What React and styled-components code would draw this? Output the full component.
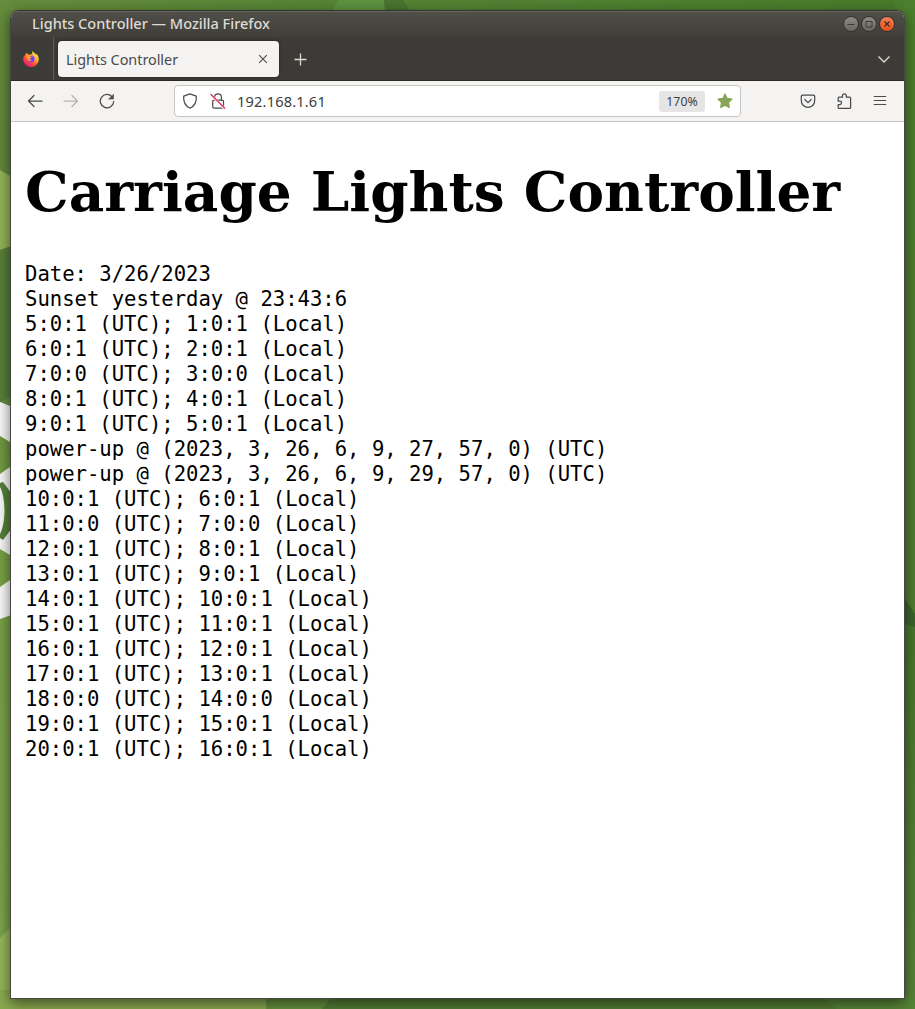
import React from "react";
import styled, { createGlobalStyle } from "styled-components";

const Global = createGlobalStyle`
  * { box-sizing: border-box; }
  html, body { margin: 0; padding: 0; height: 1009px; overflow: hidden; }
`;

const Desktop = styled.main`
  position: relative;
  width: 915px;
  height: 1009px;
  padding: 10px 10px 10px 10px;
  overflow: hidden;
  background: #4f7f2f;
`;

const Wallpaper = styled.svg`
  position: absolute;
  inset: 0;
`;

const Window = styled.section`
  position: relative;
  display: flex;
  flex-direction: column;
  width: 895px;
  height: 989px;
  border: 1px solid #474642;
  border-top-color: #34332f;
  border-radius: 8px 8px 0 0;
  overflow: hidden;
  background: #fff;
`;

const Shadow = styled.div`
  position: relative;
  width: 895px;
  height: 989px;
  border-radius: 8px 8px 0 0;
  box-shadow: 0 4px 14px rgba(0, 0, 0, 0.55);
`;

const TitleBar = styled.header`
  display: flex;
  align-items: center;
  justify-content: space-between;
  height: 26px;
  flex: none;
  padding: 0 9.5px 0 21px;
  background: linear-gradient(#504f4a, #3f3e39);
  box-shadow: inset 0 1px #66655f;
`;

const Title = styled.span`
  padding-bottom: 2px;
  font: 500 14.5px/22px "Noto Sans", "Open Sans", sans-serif;
  color: #dfdbd2;
  white-space: nowrap;
`;

const WindowButtons = styled.div`
  display: flex;
  gap: 2px;
`;

const WindowButton = styled.button`
  width: 16px;
  height: 16px;
  padding: 0;
  border: 1px solid #33322e;
  border-radius: 50%;
  background: ${(p) => (p.$close ? "linear-gradient(#f58059, #e4501c)" : "linear-gradient(#8b8a82, #67665f)")};
  svg { display: block; }
`;

const TabStrip = styled.nav`
  display: flex;
  height: 44px;
  flex: none;
  background: #3c3b37;
  border-bottom: 1px solid #2b2926;
`;

const PinnedTab = styled.div`
  display: flex;
  align-items: center;
  width: 43px;
  padding-left: 12px;
  border-right: 1px solid #5c5b57;
`;

const Tab = styled.div`
  display: flex;
  align-items: center;
  justify-content: space-between;
  width: 221px;
  height: 36px;
  margin: 4px 0 0 4px;
  padding: 0 11px 0 8px;
  border-radius: 4px;
  background: #f4f3f2;
  box-shadow: 0 0 3px rgba(0, 0, 0, 0.5);
`;

const TabLabel = styled.span`
  padding-top: 1px;
  font: 14.4px/20px "Noto Sans", "Open Sans", sans-serif;
  letter-spacing: -0.03px;
  color: #4a4a4a;
  white-space: nowrap;
`;

const NewTab = styled.div`
  display: flex;
  align-items: center;
  margin-left: 14px;
`;

const TabList = styled(NewTab)`
  margin: 0 13px 0 auto;
`;

const ToolBar = styled.div`
  display: flex;
  align-items: center;
  justify-content: space-between;
  height: 41px;
  flex: none;
  padding: 0 16px;
  background: #f4f3f2;
  border-bottom: 1px solid #c6c4c2;
  svg { display: block; }
`;

const NavGroup = styled.div`
  display: flex;
  gap: 20px;
`;

const UrlBar = styled.div`
  display: flex;
  align-items: center;
  width: 567px;
  height: 32px;
  padding: 0 7px;
  border: 1px solid #c6c4c2;
  border-radius: 4px;
  background: #fff;
`;

const Address = styled.span`
  margin: 0 auto 0 11px;
  padding-bottom: 1px;
  font: 14.6px/20px "Noto Sans", "Open Sans", sans-serif;
  letter-spacing: 0.17px;
  color: #3d3d3d;
`;

const LockSlot = styled.span`
  margin-left: 12px;
`;

const ZoomBadge = styled.span`
  width: 46px;
  height: 21px;
  margin-right: 12px;
  border-radius: 3px;
  background: #e5e5e6;
  font: 12.3px/21px "Noto Sans", "Open Sans", sans-serif;
  text-align: center;
  color: #3d3d3d;
`;

const Page = styled.article`
  flex: 1;
  padding: 37px 14px 0;
  color: #000;
`;

const Heading = styled.h1`
  margin: 0;
  font: bold 54.86px/66px "DejaVu Serif", serif;
  white-space: nowrap;
`;

const Log = styled.pre`
  margin: 37px 0 0;
  font: 20.59px/25px "DejaVu Sans Mono", monospace;
`;

const Icon = ({ size = 16, color = "#4b4b4b", width = 1.25, children }) => (
  <svg width={size} height={size} viewBox="0 0 16 16" fill="none" stroke={color} strokeWidth={width} strokeLinecap="round" strokeLinejoin="round">
    {children}
  </svg>
);

const FirefoxLogo = () => (
  <svg width="16" height="16" viewBox="0 0 16 16">
    <defs>
      <linearGradient id="flame" x1="0.85" y1="0.05" x2="0.2" y2="0.95">
        <stop offset="0" stopColor="#fff44f" />
        <stop offset="0.35" stopColor="#ffb02a" />
        <stop offset="0.62" stopColor="#ff5634" />
        <stop offset="1" stopColor="#e5137c" />
      </linearGradient>
    </defs>
    <path d="M9.5 0c-.3 1.2-.5 2.200-.1 2.900L6.500 3.800 5.200 3.200 3 1.700 2.500 3.700C1 4.300.2 6.500.2 8.400a7.800 7.500 0 0 0 15.600 0c0-2.100-.9-4.500-2.400-5.600.1.6.1 1 .1 1.400C12.400 2 10.300 1.700 9.500 0z" fill="url(#flame)" />
    <circle cx="8.200" cy="8.300" r="3.200" fill="#7542e5" />
    <path d="M3.200 5.200c1.500-.8 2.900-.7 4 .3l1.700.4c-.2.900-1.500 1-1.700 1.500-.4 1.500.8 2 2 1.700-1.500 2-4.700 1-5-1.500z" fill="#ff9b31" />
    <path d="M8.600 4.600c2.200 0 3.200 2 2.600 3.700" stroke="#9059ff" fill="none" />
  </svg>
);

const LINES = [
  "Date: 3/26/2023",
  "Sunset yesterday @ 23:43:6",
  "5:0:1 (UTC); 1:0:1 (Local)",
  "6:0:1 (UTC); 2:0:1 (Local)",
  "7:0:0 (UTC); 3:0:0 (Local)",
  "8:0:1 (UTC); 4:0:1 (Local)",
  "9:0:1 (UTC); 5:0:1 (Local)",
  "power-up @ (2023, 3, 26, 6, 9, 27, 57, 0) (UTC)",
  "power-up @ (2023, 3, 26, 6, 9, 29, 57, 0) (UTC)",
  "10:0:1 (UTC); 6:0:1 (Local)",
  "11:0:0 (UTC); 7:0:0 (Local)",
  "12:0:1 (UTC); 8:0:1 (Local)",
  "13:0:1 (UTC); 9:0:1 (Local)",
  "14:0:1 (UTC); 10:0:1 (Local)",
  "15:0:1 (UTC); 11:0:1 (Local)",
  "16:0:1 (UTC); 12:0:1 (Local)",
  "17:0:1 (UTC); 13:0:1 (Local)",
  "18:0:0 (UTC); 14:0:0 (Local)",
  "19:0:1 (UTC); 15:0:1 (Local)",
  "20:0:1 (UTC); 16:0:1 (Local)",
];

export default function App() {
  return (
    <Desktop>
      <Global />
      <Wallpaper width="915" height="1009" viewBox="0 0 915 1009">
        <defs>
          <linearGradient id="top"><stop offset="0" stopColor="#668c3d" /><stop offset="0.35" stopColor="#568536" /><stop offset="1" stopColor="#487b2b" /></linearGradient>
          <linearGradient id="left" x2="0" y2="1"><stop offset="0" stopColor="#638b3b" /><stop offset="0.3" stopColor="#5f8639" /><stop offset="0.5" stopColor="#76a044" /><stop offset="1" stopColor="#7aa34a" /></linearGradient>
          <linearGradient id="right" x2="0" y2="1"><stop offset="0" stopColor="#4c802e" /><stop offset="0.6" stopColor="#527d31" /><stop offset="0.62" stopColor="#47772e" /><stop offset="1" stopColor="#598538" /></linearGradient>
        </defs>
        <rect width="915" height="20" fill="url(#top)" />
        <path d="M338 0h46v12h-52z" fill="#5d9340" />
        <path d="M384 0h19l13 20h-28z" fill="#4a7430" />
        <rect y="10" width="20" height="999" fill="url(#left)" />
        <path d="M0 170l20 12v62L0 250z" fill="#93b456" />
        <path d="M0 250l20-7v150L0 402z" fill="#587f38" />
        <path d="M0 402l20 8v38L0 436z" fill="#f8f8f8" />
        <path d="M0 474l20-14v101L0 549z" fill="#f8f8f8" />
        <path d="M0 483l3-1 9 12v34l-9 12-3-2v-4c6-12 6-35 0-47z" fill="#55803a" />
        <path d="M0 587l20-14v39L0 619z" fill="#f8f8f8" />
        <path d="M0 938l20-20v91H0z" fill="#94b659" />
        <path d="M895 0h20v1009h-20z" fill="url(#right)" />
        <path d="M903 596l12 18v13l-12-4z" fill="#3b642a" />
        <path d="M0 990h266v19H0z" fill="#88a94f" />
        <path d="M266 990h76l-20 19h-56z" fill="#66913e" />
        <path d="M338 990h477l22 19H322z" fill="#527c34" />
        <path d="M815 990h100v19h-78z" fill="#568637" />
      </Wallpaper>
      <Shadow>
        <Window>
          <TitleBar>
            <Title>Lights Controller — Mozilla Firefox</Title>
            <WindowButtons>
              <WindowButton aria-label="Minimize"><svg width="14" height="14" stroke="#3c3b37"><path d="M3.500 7.500h7" /></svg></WindowButton>
              <WindowButton aria-label="Maximize"><svg width="14" height="14" stroke="#3c3b37" fill="none"><path d="M4 4.500h6v5.500h-6z" /></svg></WindowButton>
              <WindowButton $close aria-label="Close"><svg width="14" height="14" stroke="#4b2a1d" strokeWidth="1.300"><path d="M4.500 4.500l5 5M9.500 4.500l-5 5" /></svg></WindowButton>
            </WindowButtons>
          </TitleBar>
          <TabStrip>
            <PinnedTab><FirefoxLogo /></PinnedTab>
            <Tab>
              <TabLabel>Lights Controller</TabLabel>
              <svg width="10" height="10" stroke="#4b4b4b" strokeWidth="1.100"><path d="M1.200 1.200l7.600 7.600M8.800 1.200l-7.600 7.600" /></svg>
            </Tab>
            <NewTab><svg width="14" height="14" stroke="#dfdbd2" strokeWidth="1.300"><path d="M7.500 1.500v12M1.500 7.500h12" /></svg></NewTab>
            <TabList><svg width="14" height="8" fill="none" stroke="#dfdbd2" strokeWidth="1.400"><path d="M1.500 1.500l5.500 5.500 5.500-5.500" /></svg></TabList>
          </TabStrip>
          <ToolBar>
            <NavGroup>
              <Icon><path d="M15 8H1.500M7 2.500L1.500 8 7 13.500" /></Icon>
              <Icon color="#b5b4b3"><path d="M1 8h13.500M9 2.500L14.500 8 9 13.500" /></Icon>
              <Icon><path d="M13.500 4.300A6.700 6.700 0 1 0 14.700 8.500" /><path d="M14.500 1.500v4.600H9.900z" fill="#4b4b4b" strokeWidth=".6" /></Icon>
            </NavGroup>
            <UrlBar>
              <Icon><path d="M8 .8l6.300 2.400c.5 5.300-1.300 9.500-6.300 12C3 12.700 1.200 8.500 1.700 3.200z" /></Icon>
              <LockSlot>
                <Icon><rect x="2.700" y="7.200" width="10.800" height="7.800" rx="1.300" /><path d="M4.600 7V4.300a3.400 3.400 0 0 1 6.800 0V7" /><path d="M1.200 2.200l13 13" stroke="#fff" strokeWidth="2.500" /><path d="M1 1.500l13.700 13.700" stroke="#e22850" /></Icon>
              </LockSlot>
              <Address>192.168.1.61</Address>
              <ZoomBadge>170%</ZoomBadge>
              <Icon color="#86a556"><path d="M8 1l2.100 4.400 4.900.7-3.500 3.400.8 4.900L8 12.100l-4.300 2.300.8-4.900L1 6.100l4.900-.7z" fill="#86a556" /></Icon>
            </UrlBar>
            <NavGroup>
              <Icon><path d="M2.500 2h11c.7 0 1.200.5 1.200 1.200v4.300c0 9-13.400 9-13.400 0V3.200c0-.7.500-1.200 1.200-1.200z" /><path d="M4.800 6.500L8 9.600l3.200-3.100" /></Icon>
              <Icon><path d="M2.200 5.200c0-.6.400-1 1-1h3.300V2.800a1.900 1.900 0 0 1 3.800 0v1.400h3.300c.6 0 1 .4 1 1v9.200c0 .6-.4 1-1 1H3.200c-.6 0-1-.4-1-1v-2.900h1.700a1.600 1.600 0 0 0 0-3.300H2.200z" /></Icon>
              <Icon><path d="M2.200 3.500h11.600M2.200 7.500h11.600M2.200 11.500h11.600" strokeWidth="1.100" /></Icon>
            </NavGroup>
          </ToolBar>
          <Page>
            <Heading>Carriage Lights Controller</Heading>
            <Log>{LINES.join("\n")}</Log>
          </Page>
        </Window>
      </Shadow>
    </Desktop>
  );
}
